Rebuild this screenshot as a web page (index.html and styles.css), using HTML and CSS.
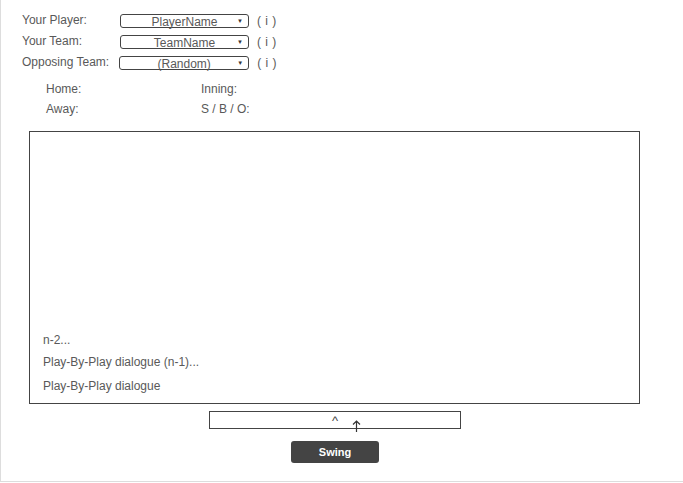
FILE: index.html
```html
<!DOCTYPE html>
<html>
<head>
<meta charset="utf-8">
<link rel="stylesheet" href="styles.css">
</head>
<body>
<div class="frame">
  <div class="form">
    <div class="row">
      <span class="label">Your Player:</span>
      <div class="select"><span class="val">PlayerName</span><span class="arrow">▼</span></div>
      <span class="info">( i )</span>
    </div>
    <div class="row">
      <span class="label">Your Team:</span>
      <div class="select"><span class="val">TeamName</span><span class="arrow">▼</span></div>
      <span class="info">( i )</span>
    </div>
    <div class="row">
      <span class="label label-auto">Opposing Team:</span>
      <div class="select select-wide"><span class="val">(Random)</span><span class="arrow">▼</span></div>
      <span class="info">( i )</span>
    </div>
  </div>
  <div class="score">
    <div class="score-col">
      <div class="score-line">Home:</div>
      <div class="score-line">Away:</div>
    </div>
    <div class="score-col">
      <div class="score-line">Inning:</div>
      <div class="score-line">S / B / O:</div>
    </div>
  </div>
  <div class="log">
    <div class="log-line first">n-2...</div>
    <div class="log-line">Play-By-Play dialogue (n-1)...</div>
    <div class="log-line">Play-By-Play dialogue</div>
  </div>
  <div class="input-row">
    <div class="input">
      <span class="caret">^</span>
      <svg class="cursor" width="9" height="12" viewBox="0 0 9 12"><path d="M4.5 1 L4.5 12 M1 4.5 L4.5 1 L8 4.5" fill="none" stroke="#333" stroke-width="1.2"/></svg>
    </div>
  </div>
  <div class="btn-row">
    <button class="swing">Swing</button>
  </div>
</div>
</body>
</html>
```
FILE: styles.css
```css
html, body {
  margin: 0;
  padding: 0;
  background: #fff;
}
body {
  font-family: "Liberation Sans", Arial, sans-serif;
  font-size: 12px;
  color: #595959;
}
.frame {
  height: 481px;
  border-left: 1px solid #ddd;
  border-bottom: 1px solid #ddd;
  overflow: hidden;
}
.form {
  padding: 14px 0 0 21px;
  display: flex;
  flex-direction: column;
  gap: 8px;
}
.row {
  display: flex;
  align-items: center;
  height: 13px;
}
.label {
  width: 98px;
  line-height: 13px;
}
.label-auto {
  width: auto;
  margin-right: 10px;
}
.select {
  box-sizing: border-box;
  width: 129px;
  height: 14px;
  border: 1px solid #444;
  border-radius: 3px;
  display: flex;
  align-items: center;
  position: relative;
}
.select-wide {
  width: 130px;
}
.val {
  flex: 1;
  text-align: center;
  line-height: 12px;
  padding-left: 11px;
  padding-top: 2px;
}
.arrow {
  font-size: 6px;
  color: #333;
  width: 11px;
  text-align: left;
}
.info {
  margin-left: 8px;
  letter-spacing: 0.5px;
}
.score {
  display: flex;
  padding: 13px 0 0 45px;
}
.score-col {
  width: 155px;
  display: flex;
  flex-direction: column;
  gap: 6px;
}
.score-line {
  line-height: 14px;
}
.log {
  box-sizing: border-box;
  margin: 15px 0 0 28px;
  width: 611px;
  height: 273px;
  border: 1px solid #444;
  display: flex;
  flex-direction: column;
  justify-content: flex-end;
  padding: 0 0 10px 13px;
}
.log-line {
  line-height: 14px;
  margin-top: 8px;
}
.log-line:nth-child(3) {
  margin-top: 10px;
}
.input-row {
  display: flex;
  padding: 7px 0 0 208px;
}
.input {
  box-sizing: border-box;
  width: 252px;
  height: 18px;
  border: 1px solid #444;
  position: relative;
}
.caret {
  position: absolute;
  left: 122px;
  top: 1px;
  font-size: 13px;
  color: #444;
}
.cursor {
  position: absolute;
  left: 142px;
  top: 8px;
}
.btn-row {
  display: flex;
  padding: 12px 0 0 290px;
}
.swing {
  width: 88px;
  height: 22px;
  background: #444;
  color: #fff;
  border: none;
  border-radius: 3px;
  font-family: "Liberation Sans", Arial, sans-serif;
  font-size: 11px;
  font-weight: bold;
  padding: 0;
}
```
